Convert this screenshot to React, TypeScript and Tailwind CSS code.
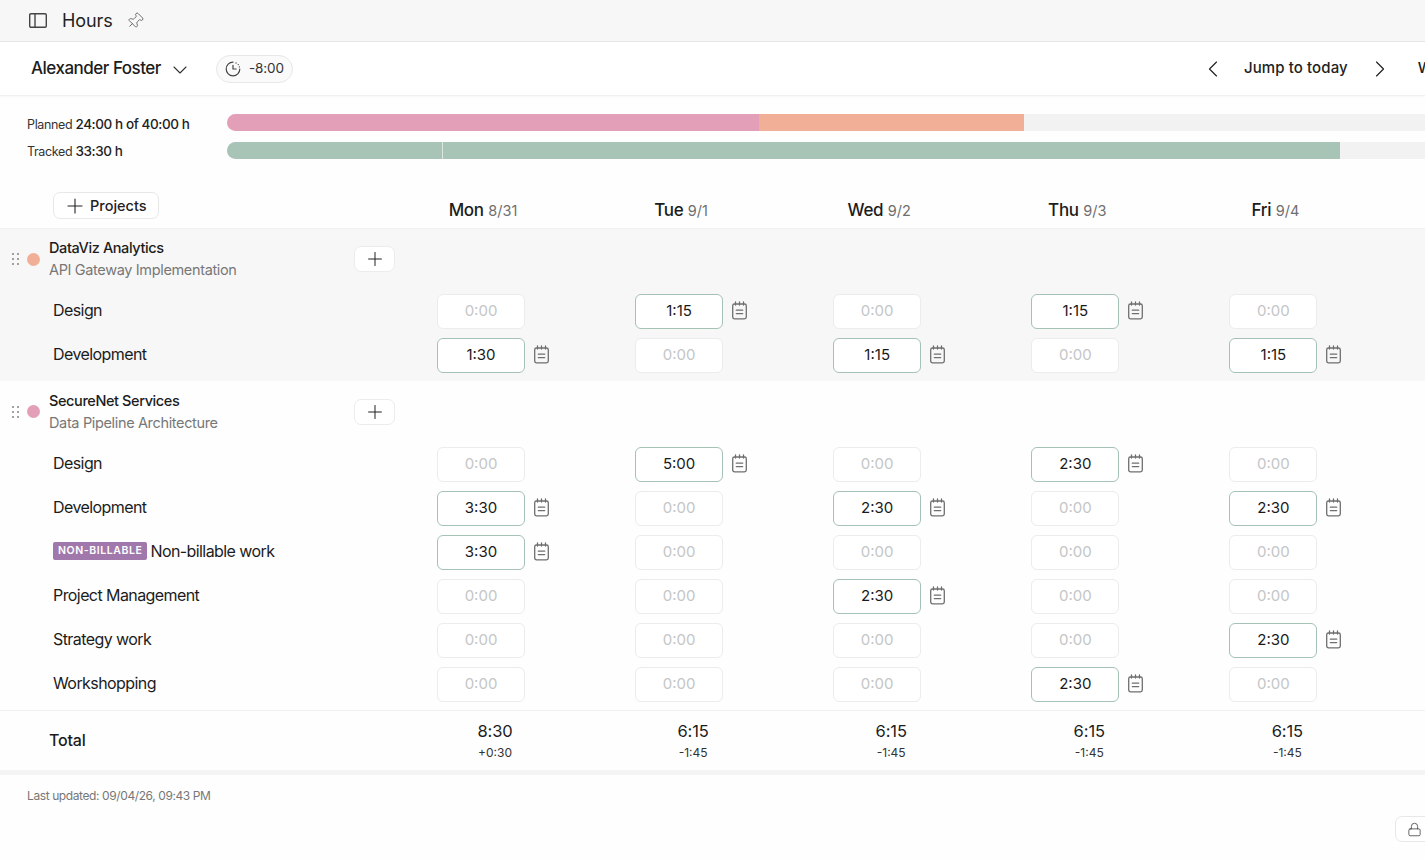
import React from "react";
import { Plus, ChevronDown, ChevronLeft, ChevronRight, Lock, Pin } from "lucide-react";

function Note() {
  return (
    <svg width="17" height="19" viewBox="0 0 17 19" fill="none" stroke="#6f6f6f" strokeWidth="1.3" strokeLinecap="round" className="shrink-0 -translate-y-px">
      <rect x="1.7" y="3" width="13.6" height="14.8" rx="1.8" />
      <path d="M4.5 1v3M8.5 1v3M12.5 1v3M5.3 9.2h6.4M5.3 12.6h6.4" />
    </svg>
  );
}

function Grip() {
  return (
    <svg width="7" height="12" viewBox="0 0 7 12" fill="#777" className="shrink-0">
      {[1, 6, 11].map((y) => (
        <g key={y}>
          <circle cx="1" cy={y} r="0.9" />
          <circle cx="6" cy={y} r="0.9" />
        </g>
      ))}
    </svg>
  );
}

function Cell({ value }: { value: string | null }) {
  return (
    <div className="w-[198.1px] shrink-0 flex items-center gap-2">
      {value ? (
        <>
          <div className="w-[88px] h-[35px] flex items-center justify-center rounded-[6px] border border-[#a5c2b5] bg-white text-[15px] text-[#1a1a1a] shrink-0">
            {value}
          </div>
          <Note />
        </>
      ) : (
        <div className="w-[88px] h-[35px] flex items-center justify-center rounded-[6px] border border-[#ececec] bg-white text-[15px] text-[#c4c6c6] shrink-0">
          0:00
        </div>
      )}
    </div>
  );
}

function Row({ label, badge, values }: { label: string; badge?: boolean; values: (string | null)[] }) {
  return (
    <div className="h-11 flex items-center">
      <div className="w-[437px] shrink-0 pl-[53px] pb-[2px] flex items-center gap-[3px] text-[16px] tracking-[-0.58px] text-[#1c1c1c]">
        {badge && (
          <span className="h-[18px] px-[5px] flex items-center rounded-[2px] bg-[#a078ab] text-white text-[10.5px] font-semibold tracking-[0.58px]">
            NON-BILLABLE
          </span>
        )}
        <span>{label}</span>
      </div>
      {values.map((v, i) => (
        <Cell key={i} value={v} />
      ))}
    </div>
  );
}

function ProjectHead({ name, sub, color, h }: { name: string; sub: string; color: string; h: string }) {
  return (
    <div className={`flex items-center pl-[12px] ${h}`}>
      <Grip />
      <div className={`w-[13px] h-[13px] rounded-full ml-[8px] shrink-0 ${color}`} />
      <div className="ml-[9px] w-[305px] shrink-0">
        <div className="text-[14.5px] font-medium leading-[22px] tracking-[-0.4px] text-[#1c1c1c]">{name}</div>
        <div className="text-[14.5px] leading-[22px] tracking-[-0.35px] text-[#777]">{sub}</div>
      </div>
      <div className="w-[41px] h-[26px] flex items-center justify-center rounded-[7px] border border-[#ececec] bg-white shrink-0">
        <Plus size={22} strokeWidth={1.1} color="#222" />
      </div>
    </div>
  );
}

const days = [
  ["Mon", "8/31"],
  ["Tue", "9/1"],
  ["Wed", "9/2"],
  ["Thu", "9/3"],
  ["Fri", "9/4"],
];
const totals = [
  ["8:30", "+0:30"],
  ["6:15", "-1:45"],
  ["6:15", "-1:45"],
  ["6:15", "-1:45"],
  ["6:15", "-1:45"],
];

export default function App() {
  return (
    <div className="w-[1425px] h-[859px] overflow-hidden bg-[#fefefe] flex flex-col" style={{ fontFamily: "Inter, 'Noto Sans', sans-serif" }}>
      <header className="h-[42px] shrink-0 bg-[#f7f7f7] border-b border-[#e5e5e5] flex items-center pl-[29px]">
        <svg width="18" height="15" viewBox="0 0 18 15" fill="none" stroke="#444" strokeWidth="1.4">
          <rect x="0.7" y="0.7" width="16.6" height="13.6" rx="1.2" />
          <path d="M6 0.7v13.6" />
        </svg>
        <span className="ml-[15px] text-[18px] tracking-[-0.1px] text-[#222]">Hours</span>
        <Pin size={18} strokeWidth={1.2} color="#666" className="ml-[13px] rotate-45" />
      </header>

      <div className="h-[54px] shrink-0 bg-white border-b border-[#f0f0f0] flex items-center shadow-[0_1px_2px_rgba(0,0,0,0.03)]">
        <div className="w-[1199px] shrink-0 pl-[31px] flex items-center">
          <span className="text-[17px] font-medium tracking-[-0.5px] text-[#1c1c1c]">Alexander Foster</span>
          <ChevronDown size={24} strokeWidth={1.1} color="#333" className="ml-[7px] mt-[2px]" />
          <div className="ml-[24px] w-[77px] h-[28px] rounded-full border border-[#e8e8e8] bg-[#fafafa] flex items-center justify-center gap-[8px] text-[13.5px] tracking-[-0.1px] text-[#333]">
            <svg width="16" height="16" viewBox="0 0 16 16" fill="none" stroke="#444" strokeWidth="1.2" strokeLinecap="round">
              <path d="M8 1.2a6.8 6.8 0 1 0 6.8 6.8" />
              <path d="M8 4.3V8h3.2" />
              <path d="M11 1.9l.1.1M13.2 3.6l.1.1M14.4 5.8v.1" />
            </svg>
            <span>-8:00</span>
          </div>
        </div>
        <ChevronLeft size={28} strokeWidth={1} color="#222" className="shrink-0" />
        <span className="ml-[17px] shrink-0 text-[15px] font-medium tracking-[0.1px] text-[#222]">Jump to today</span>
        <ChevronRight size={28} strokeWidth={1} color="#222" className="ml-[18px] shrink-0" />
        <span className="ml-[24px] shrink-0 text-[15px] font-medium text-[#222]">Week</span>
      </div>

      <div className="shrink-0 pt-[18px] h-[96px] flex flex-col gap-[11px]">
        <div className="flex items-center h-[17px]">
          <div className="w-[227px] pl-[27px] pt-[4px] shrink-0 text-[12.5px] text-[#333] whitespace-nowrap tracking-[-0.35px]">
            Planned <span className="text-[13.5px] font-medium tracking-[-0.42px] text-[#222]">24:00 h of 40:00 h</span>
          </div>
          <div className="flex-1 h-[17px] rounded-l-full bg-[#f2f2f2] overflow-hidden flex">
            <div className="w-[532px] bg-[#e49fb8]" />
            <div className="w-[265px] bg-[#f2af98]" />
          </div>
        </div>
        <div className="flex items-center h-[17px]">
          <div className="w-[227px] pl-[27px] pt-[2px] shrink-0 text-[12.5px] text-[#333] whitespace-nowrap tracking-[-0.35px]">
            Tracked <span className="text-[13.5px] font-medium tracking-[-0.42px] text-[#222]">33:30 h</span>
          </div>
          <div className="flex-1 h-[17px] rounded-l-full bg-[#f2f2f2] overflow-hidden flex">
            <div className="w-[216px] bg-[#a8c4b7] border-r border-[#dbe7e1]" />
            <div className="w-[897px] bg-[#a8c4b7]" />
          </div>
        </div>
      </div>

      <div className="h-[37px] shrink-0 flex items-start border-b border-[#f0f0f0]">
        <div className="w-[437px] shrink-0 pl-[53px]">
          <div className="w-[106px] h-[27px] flex items-center pl-[9px] gap-[3px] rounded-[7px] border border-[#e8e8e8] bg-white text-[14.5px] font-medium text-[#222]">
            <Plus size={24} strokeWidth={1.1} color="#222" />
            <span>Projects</span>
          </div>
        </div>
        {days.map(([d, dt]) => (
          <div key={d} className="w-[198.1px] shrink-0">
            <div className="w-[92px] mt-[7px] text-center whitespace-nowrap leading-[22px]">
              <span className="text-[17px] font-medium tracking-[-0.3px] text-[#1c1c1c]">{d}</span>{" "}
              <span className="text-[14.5px] text-[#6f6f6f]">{dt}</span>
            </div>
          </div>
        ))}
      </div>

      <section className="h-[152px] shrink-0 bg-[#f7f7f7]">
        <ProjectHead name="DataViz Analytics" sub="API Gateway Implementation" color="bg-[#f2af98]" h="h-[60px]" />
        <Row label="Design" values={[null, "1:15", null, "1:15", null]} />
        <Row label="Development" values={["1:30", null, "1:15", null, "1:15"]} />
      </section>

      <section className="h-[330px] shrink-0 border-b border-[#f0f0f0]">
        <ProjectHead name="SecureNet Services" sub="Data Pipeline Architecture" color="bg-[#e49fb8]" h="h-[61px]" />
        <Row label="Design" values={[null, "5:00", null, "2:30", null]} />
        <Row label="Development" values={["3:30", null, "2:30", null, "2:30"]} />
        <Row label="Non-billable work" badge values={["3:30", null, null, null, null]} />
        <Row label="Project Management" values={[null, null, "2:30", null, null]} />
        <Row label="Strategy work" values={[null, null, null, null, "2:30"]} />
        <Row label="Workshopping" values={[null, null, null, "2:30", null]} />
      </section>

      <div className="h-[64px] shrink-0 flex items-center border-b-[5px] border-[#f4f4f4]">
        <div className="w-[437px] shrink-0 pl-[49px] pb-[2px] text-[16px] font-medium tracking-[-0.2px] text-[#1c1c1c]">Total</div>
        {totals.map(([a, b], i) => (
          <div key={i} className="w-[198.1px] shrink-0">
            <div className="w-[116px] text-center mt-[2px]">
              <div className="text-[16.5px] leading-[22px] tracking-[-0.1px] text-[#1c1c1c]">{a}</div>
              <div className="mt-[1px] text-[12px] leading-[20px] text-[#333]">{b}</div>
            </div>
          </div>
        ))}
      </div>

      <div className="pl-[27px] pt-[13px] text-[12px] leading-[16px] tracking-[-0.4px] text-[#777]">Last updated: 09/04/26, 09:43 PM</div>

      <div className="flex justify-end mt-[12px]">
        <div className="w-[31px] h-[26px] -mr-px flex items-center justify-center rounded-l-[7px] border border-[#e8e8e8] bg-white">
          <Lock size={15} strokeWidth={1.3} color="#444" className="ml-[7px]" />
        </div>
      </div>
    </div>
  );
}
